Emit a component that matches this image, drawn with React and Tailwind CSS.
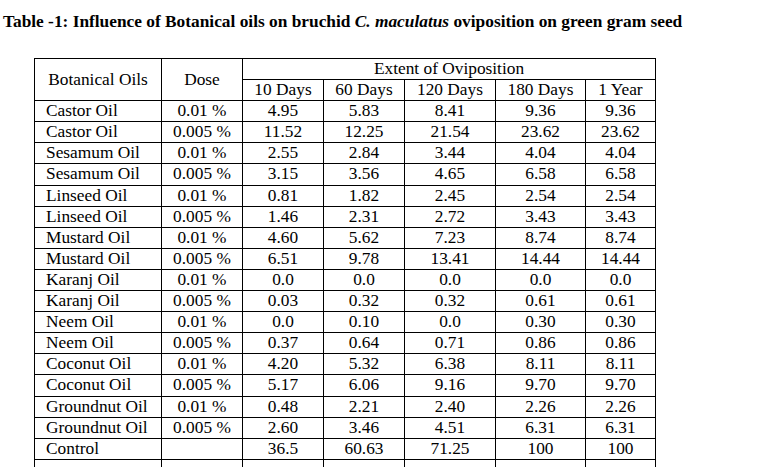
import React from "react";

const rows = [
  ["Castor Oil", "0.01 %", "4.95", "5.83", "8.41", "9.36", "9.36"],
  ["Castor Oil", "0.005 %", "11.52", "12.25", "21.54", "23.62", "23.62"],
  ["Sesamum Oil", "0.01 %", "2.55", "2.84", "3.44", "4.04", "4.04"],
  ["Sesamum Oil", "0.005 %", "3.15", "3.56", "4.65", "6.58", "6.58"],
  ["Linseed Oil", "0.01 %", "0.81", "1.82", "2.45", "2.54", "2.54"],
  ["Linseed Oil", "0.005 %", "1.46", "2.31", "2.72", "3.43", "3.43"],
  ["Mustard Oil", "0.01 %", "4.60", "5.62", "7.23", "8.74", "8.74"],
  ["Mustard Oil", "0.005 %", "6.51", "9.78", "13.41", "14.44", "14.44"],
  ["Karanj Oil", "0.01 %", "0.0", "0.0", "0.0", "0.0", "0.0"],
  ["Karanj Oil", "0.005 %", "0.03", "0.32", "0.32", "0.61", "0.61"],
  ["Neem Oil", "0.01 %", "0.0", "0.10", "0.0", "0.30", "0.30"],
  ["Neem Oil", "0.005 %", "0.37", "0.64", "0.71", "0.86", "0.86"],
  ["Coconut Oil", "0.01 %", "4.20", "5.32", "6.38", "8.11", "8.11"],
  ["Coconut Oil", "0.005 %", "5.17", "6.06", "9.16", "9.70", "9.70"],
  ["Groundnut Oil", "0.01 %", "0.48", "2.21", "2.40", "2.26", "2.26"],
  ["Groundnut Oil", "0.005 %", "2.60", "3.46", "4.51", "6.31", "6.31"],
  ["Control", "", "36.5", "60.63", "71.25", "100", "100"],
];

const cell = "border border-black p-0 leading-[20.1px] whitespace-nowrap";

export default function App() {
  return (
    <div
      className="bg-white text-black min-h-screen"
      style={{ fontFamily: '"Liberation Serif", "Times New Roman", serif' }}
    >
      <div className="pt-[12px] pl-[3px] text-[17.33px] leading-[20px] font-bold">
        Table -1: Influence of Botanical oils on bruchid <i>C. maculatus</i> oviposition on green gram seed
      </div>
      <div className="pl-[34px] pt-[26px]">
        <table className="border-collapse table-fixed w-[622px] text-[17.33px]">
          <colgroup>
            <col className="w-[127px]" />
            <col className="w-[81px]" />
            <col className="w-[81px]" />
            <col className="w-[81px]" />
            <col className="w-[91px]" />
            <col className="w-[90px]" />
            <col className="w-[70px]" />
          </colgroup>
          <thead>
            <tr>
              <th rowSpan={2} className={`${cell} font-normal text-center align-middle`}>
                Botanical Oils
              </th>
              <th rowSpan={2} className={`${cell} font-normal text-center align-middle`}>
                Dose
              </th>
              <th colSpan={5} className={`${cell} font-normal text-center`}>
                Extent of Oviposition
              </th>
            </tr>
            <tr>
              <th className={`${cell} font-normal text-center`}>10 Days</th>
              <th className={`${cell} font-normal text-center`}>60 Days</th>
              <th className={`${cell} font-normal text-center`}>120 Days</th>
              <th className={`${cell} font-normal text-center`}>180 Days</th>
              <th className={`${cell} font-normal text-center`}>1 Year</th>
            </tr>
          </thead>
          <tbody>
            {rows.map((r, i) => (
              <tr key={i}>
                <td className={`${cell} text-left pl-[11px]`}>{r[0]}</td>
                {r.slice(1).map((v, j) => (
                  <td key={j} className={`${cell} text-center`}>
                    {v}
                  </td>
                ))}
              </tr>
            ))}
            <tr>
              <td className={`${cell} h-[21px]`}></td>
              <td className={cell}></td>
              <td className={cell}></td>
              <td className={cell}></td>
              <td className={cell}></td>
              <td className={cell}></td>
              <td className={cell}></td>
            </tr>
          </tbody>
        </table>
      </div>
    </div>
  );
}
